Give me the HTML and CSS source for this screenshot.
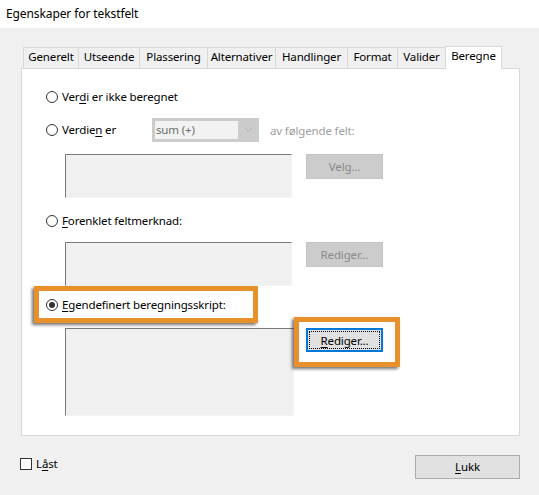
FILE: index.html
```html
<!DOCTYPE html>
<html lang="no">
<head>
<meta charset="utf-8">
<title>Egenskaper for tekstfelt</title>
<link rel="stylesheet" href="styles.css">
</head>
<body>
<div class="title">Egenskaper for tekstfelt</div>
<div class="dialog">
  <div class="tabs">
    <div class="tab t-gen">Generelt</div>
    <div class="tab t-uts">Utseende</div>
    <div class="tab t-pla">Plassering</div>
    <div class="tab t-alt">Alternativer</div>
    <div class="tab t-han">Handlinger</div>
    <div class="tab t-for">Format</div>
    <div class="tab t-val">Valider</div>
    <div class="tab t-ber active">Beregne</div>
  </div>
  <div class="panel">
    <div class="row row1">
      <span class="radio"></span><span class="lbl">Ver<u>d</u>i er ikke beregnet</span>
    </div>
    <div class="row row2">
      <span class="radio"></span><span class="lbl lbl-w">Verdie<u>n</u> er</span>
      <div class="select"><span class="select-val">sum (+)</span><span class="select-arrow"><svg width="9" height="6" viewBox="0 0 9 6"><path d="M0.5 0.5 L4.5 4.5 L8.5 0.5" fill="none" stroke="#b4b4b4" stroke-width="1"/></svg></span></div>
      <span class="dis">av følgende felt:</span>
    </div>
    <div class="field-row fr1">
      <div class="field"></div>
      <div class="btn disabled">Velg...</div>
    </div>
    <div class="row row3">
      <span class="radio"></span><span class="lbl"><u>F</u>orenklet feltmerknad:</span>
    </div>
    <div class="field-row fr2">
      <div class="field"></div>
      <div class="btn disabled">Rediger...</div>
    </div>
    <div class="hl hl1">
      <span class="radio checked"></span><span class="lbl"><u>E</u>gendefinert beregningsskript:</span>
    </div>
    <div class="field-row fr3">
      <div class="field big"></div>
      <div class="hl hl2">
        <div class="btn focused"><span class="focus-ring"><u>R</u>ediger...</span></div>
      </div>
    </div>
  </div>
  <div class="footer">
    <div class="check-wrap"><span class="check"></span><span class="lbl">L<u>å</u>st</span></div>
    <div class="btn lukk"><u>L</u>ukk</div>
  </div>
</div>
</body>
</html>
```
FILE: styles.css
```css
* { box-sizing: border-box; }
html, body { margin: 0; padding: 0; }
body {
  width: 539px;
  height: 495px;
  background: #f0f0f0;
  font-family: "Noto Sans", "Open Sans", sans-serif;
  font-size: 11.5px;
  letter-spacing: -0.15px;
  color: #000;
  overflow: hidden;
}
u { text-decoration: underline; text-underline-offset: 2px; }

.title {
  height: 28px;
  background: #fff;
  padding: 6px 0 0 6px;
  line-height: 16px;
  font-size: 12px;
  letter-spacing: -0.1px;
}

.dialog { padding: 18px 0 0 21px; }

.tabs {
  display: flex;
  align-items: flex-end;
  height: 22px;
  padding-left: 2px;
}
.tab {
  height: 21px;
  margin-right: -1px;
  border: 1px solid #d9d9d9;
  border-bottom: none;
  background: #f0f0f0;
  text-align: center;
  line-height: 18px;
  white-space: nowrap;
  position: relative;
}
.t-gen { width: 56px; }
.t-uts { width: 62px; }
.t-pla { width: 69px; }
.t-alt { width: 69px; }
.t-han { width: 73px; }
.t-for { width: 51px; }
.t-val { width: 49px; }
.t-ber { width: 57px; }
.tab.active {
  height: 23px;
  background: #fff;
  margin-bottom: -1px;
  z-index: 2;
  line-height: 17px;
}

.panel {
  width: 499px;
  height: 368px;
  background: #fff;
  border: 1px solid #d9d9d9;
  padding-top: 20px;
}

.row {
  display: flex;
  align-items: center;
  height: 16px;
  padding-left: 24px;
}
.row2 { margin-top: 17px; }
.row3 { margin-top: 15px; }

.radio {
  width: 12px;
  height: 12px;
  border: 1px solid #333;
  border-radius: 50%;
  background: #fff;
  flex: none;
  margin-right: 4px;
  position: relative;
}
.radio.checked::after {
  content: "";
  position: absolute;
  left: 2px; top: 2px;
  width: 6px; height: 6px;
  border-radius: 50%;
  background: #333;
}
.lbl { white-space: nowrap; line-height: 16px; }
.lbl-w { width: 90px; }

.select {
  display: flex;
  align-items: center;
  width: 107px;
  height: 24px;
  background: #cccccc;
  padding: 3px;
}
.select-val {
  flex: 1;
  height: 18px;
  background: #f2f2f2;
  color: #6d6d6d;
  line-height: 17px;
  padding-left: 1px;
}
.select-arrow {
  width: 18px;
  display: flex;
  justify-content: center;
  align-items: center;
  padding-left: 2px;
}
.dis { color: #a0a0a0; margin-left: 11px; white-space: nowrap; }

.field-row {
  display: flex;
  align-items: flex-start;
  padding-left: 43px;
}
.fr1 { margin-top: 16px; }
.fr2 { margin-top: 13px; }
.fr3 { margin-top: 5px; }
.field {
  width: 227px;
  height: 44px;
  background: #f0f0f0;
  border-top: 1px solid #7a7a7a;
  border-left: 1px solid #7a7a7a;
  border-right: 1px solid #f4f4f4;
  border-bottom: 1px solid #f4f4f4;
}
.field.big { width: 229px; height: 88px; }

.btn {
  width: 77px;
  height: 25px;
  margin-left: 14px;
  text-align: center;
  line-height: 23px;
  white-space: nowrap;
}
.btn.disabled {
  background: #cccccc;
  border: 1px solid #c4c4c4;
  color: #8a8a8a;
}

.hl {
  border: 5px solid #e8912c;
  box-shadow: -2px 2px 3px rgba(0, 0, 0, 0.55);
  background: #fff;
  position: relative;
  z-index: 1;
}
.hl1 {
  display: flex;
  align-items: center;
  width: 224px;
  height: 37px;
  margin: 0 0 0 12px;
  padding-left: 7px;
}
.hl2 {
  width: 106px;
  height: 50px;
  margin-top: -11px;
  padding: 6px 0 0 7px;
}
.btn.focused {
  margin-left: 0;
  width: 77px;
  height: 24px;
  background: #e1e1e1;
  border: 2px solid #0078d7;
  padding: 1px;
  line-height: 18px;
}
.focus-ring {
  display: block;
  height: 18px;
  border: 1px dotted #000;
}

.footer {
  display: flex;
  justify-content: space-between;
  align-items: flex-start;
  width: 499px;
  padding-top: 19px;
}
.check-wrap {
  display: flex;
  align-items: center;
  margin-left: -1px;
  margin-top: 1px;
}
.check {
  width: 12px;
  height: 12px;
  border: 1px solid #333;
  background: #fff;
  margin-right: 4px;
}
.btn.lukk {
  width: 105px;
  height: 24px;
  margin-left: 0;
  background: #e1e1e1;
  border: 1px solid #adadad;
  line-height: 22px;
}
```
